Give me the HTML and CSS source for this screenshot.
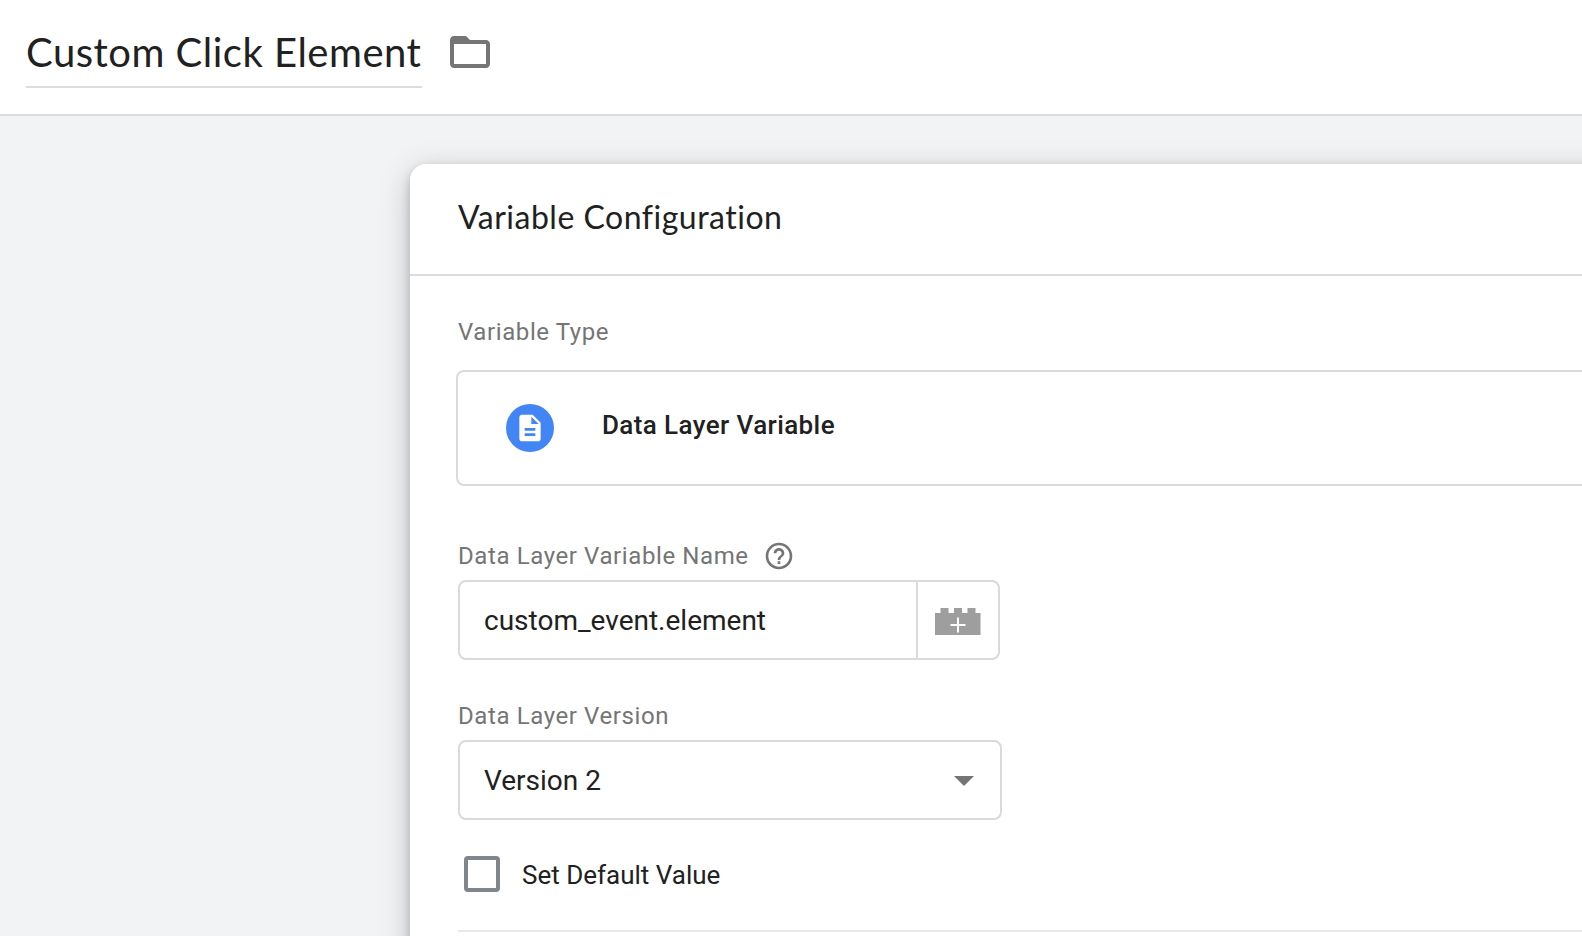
FILE: index.html
```html
<!DOCTYPE html>
<html lang="en">
<head>
<meta charset="utf-8">
<title>Custom Click Element</title>
<link rel="stylesheet" href="styles.css">
</head>
<body>
<header class="topbar">
  <h1 class="name"><span class="name-text">Custom Click Element</span></h1>
  <svg class="folder" viewBox="0 0 24 24" width="48" height="48"><path fill="#757575" d="M20 6h-8l-2-2H4c-1.100 0-2 .9-2 2v12c0 1.100.9 2 2 2h16c1.100 0 2-.9 2-2V8c0-1.100-.9-2-2-2zm0 12H4V8h16v10z"/></svg>
</header>
<main class="canvas">
  <section class="card">
    <h2 class="card-title"><span class="card-title-text">Variable Configuration</span></h2>
    <div class="card-body">
      <div class="label type-label">Variable Type</div>
      <div class="type-box">
        <span class="type-icon"><svg viewBox="0 0 24 24" width="32" height="32"><path fill="#fff" d="M14 2H6c-1.100 0-2 .9-2 2v16c0 1.100.9 2 2 2h12c1.100 0 2-.9 2-2V8l-6-6zm2 16H8v-2h8v2zm0-4H8v-2h8v2zm-3-5V3.500L18.500 9H13z"/></svg></span>
        <span class="type-name">Data Layer Variable</span>
      </div>
      <div class="label name-label"><span>Data Layer Variable Name</span>
        <svg class="help" viewBox="0 0 24 24" width="32" height="32"><path fill="#757575" d="M11 18h2v-2h-2v2zm1-16C6.480 2 2 6.480 2 12s4.480 10 10 10 10-4.480 10-10S17.520 2 12 2zm0 18c-4.410 0-8-3.590-8-8s3.590-8 8-8 8 3.590 8 8-3.590 8-8 8zm0-14c-2.210 0-4 1.790-4 4h2c0-1.100.9-2 2-2s2 .9 2 2c0 2-3 1.750-3 5h2c0-2.250 3-2.500 3-5 0-2.210-1.790-4-4-4z"/></svg>
      </div>
      <div class="input">
        <span class="value event">custom_event.element</span>
        <span class="picker"><svg viewBox="0 0 46 27" width="46" height="27"><path fill="#9e9e9e" d="M0 5h5.500V0h8v5h5.500V0h8v5h5.500V0h8v5h5V27H0z"/><path stroke="#fff" stroke-width="2" d="M15.500 17h15M23 9.500v15"/></svg></span>
      </div>
      <div class="label version-label">Data Layer Version</div>
      <div class="select">
        <span class="value">Version 2</span>
        <svg class="arrow" viewBox="0 0 20 10" width="20" height="10"><path fill="#757575" d="M0 0h20L10 10z"/></svg>
      </div>
      <div class="check-row"><span class="checkbox"></span><span class="check-label">Set Default Value</span></div>
      <hr class="divider">
    </div>
  </section>
</main>
</body>
</html>
```
FILE: styles.css
```css
* { box-sizing: border-box; }
body {
  margin: 0;
  height: 936px;
  overflow: hidden;
  background: #f1f3f4;
  color: #212121;
  font-family: Roboto, "Liberation Sans", sans-serif;
}
svg { display: block; flex: none; }
h1, h2 {
  margin: 0;
  font-weight: 400;
  font-family: Lato, Roboto, sans-serif;
  font-variant-ligatures: none;
  letter-spacing: .5px;
  white-space: nowrap;
}
.topbar {
  display: flex;
  align-items: flex-start;
  gap: 24px;
  height: 116px;
  padding: 28px 26px 0;
  background: #fff;
  border-bottom: 2px solid #dadce0;
}
.name {
  width: 396px;
  height: 60px;
  border-bottom: 2px solid #dadce0;
  font-size: 40px;
  line-height: 48px;
}
.canvas { height: 820px; padding: 48px 0 0 410px; overflow: hidden; }
.card {
  width: 1400px;
  height: 1000px;
  background: #fff;
  border-radius: 16px;
  box-shadow: 0 4px 10px rgba(0, 0, 0, .2), 0 8px 32px rgba(0, 0, 0, .2);
}
.card-title {
  height: 112px;
  padding: 32px 48px 0;
  border-bottom: 2px solid #dadce0;
  font-size: 32px;
  line-height: 42px;
}
.card-body { padding: 40px 0 0 48px; }
.label {
  height: 32px;
  color: #757575;
  font-size: 24px;
  line-height: 32px;
  letter-spacing: .6px;
}
.type-box {
  display: flex;
  align-items: center;
  gap: 48px;
  height: 116px;
  margin: 22px 0 0 -2px;
  padding-left: 48px;
  border: 2px solid #dadada;
  border-radius: 8px;
}
.type-icon {
  display: grid;
  place-items: center;
  width: 48px;
  height: 48px;
  border-radius: 50%;
  background: #4285f4;
}
.type-name { padding-bottom: 6px; font-size: 26px; font-weight: 500; letter-spacing: .4px; }
.name-label { display: flex; gap: 14px; margin-top: 54px; }
.input, .select {
  display: flex;
  height: 80px;
  border: 2px solid #dadada;
  border-radius: 8px;
}
.input { width: 542px; margin-top: 8px; }
.value { flex: 1; padding-left: 24px; font-size: 28px; line-height: 78px; height: 76px; }
.picker {
  width: 82px;
  padding: 26px 0 0 17px;
  border-left: 2px solid #dadada;
}
.version-label { margin-top: 40px; }
.select { width: 544px; margin-top: 8px; padding-right: 26px; }
.arrow { margin-top: 34px; }
.check-row { display: flex; align-items: center; height: 36px; margin: 36px 0 0 6px; }
.checkbox { width: 36px; height: 36px; border: 4px solid #80868b; border-radius: 4px; }
.check-label { margin-left: 22px; padding-top: 1px; font-size: 26px; }
.divider { height: 2px; margin: 38px 0 0; border: 0; background: #e8e8e8; }
```
